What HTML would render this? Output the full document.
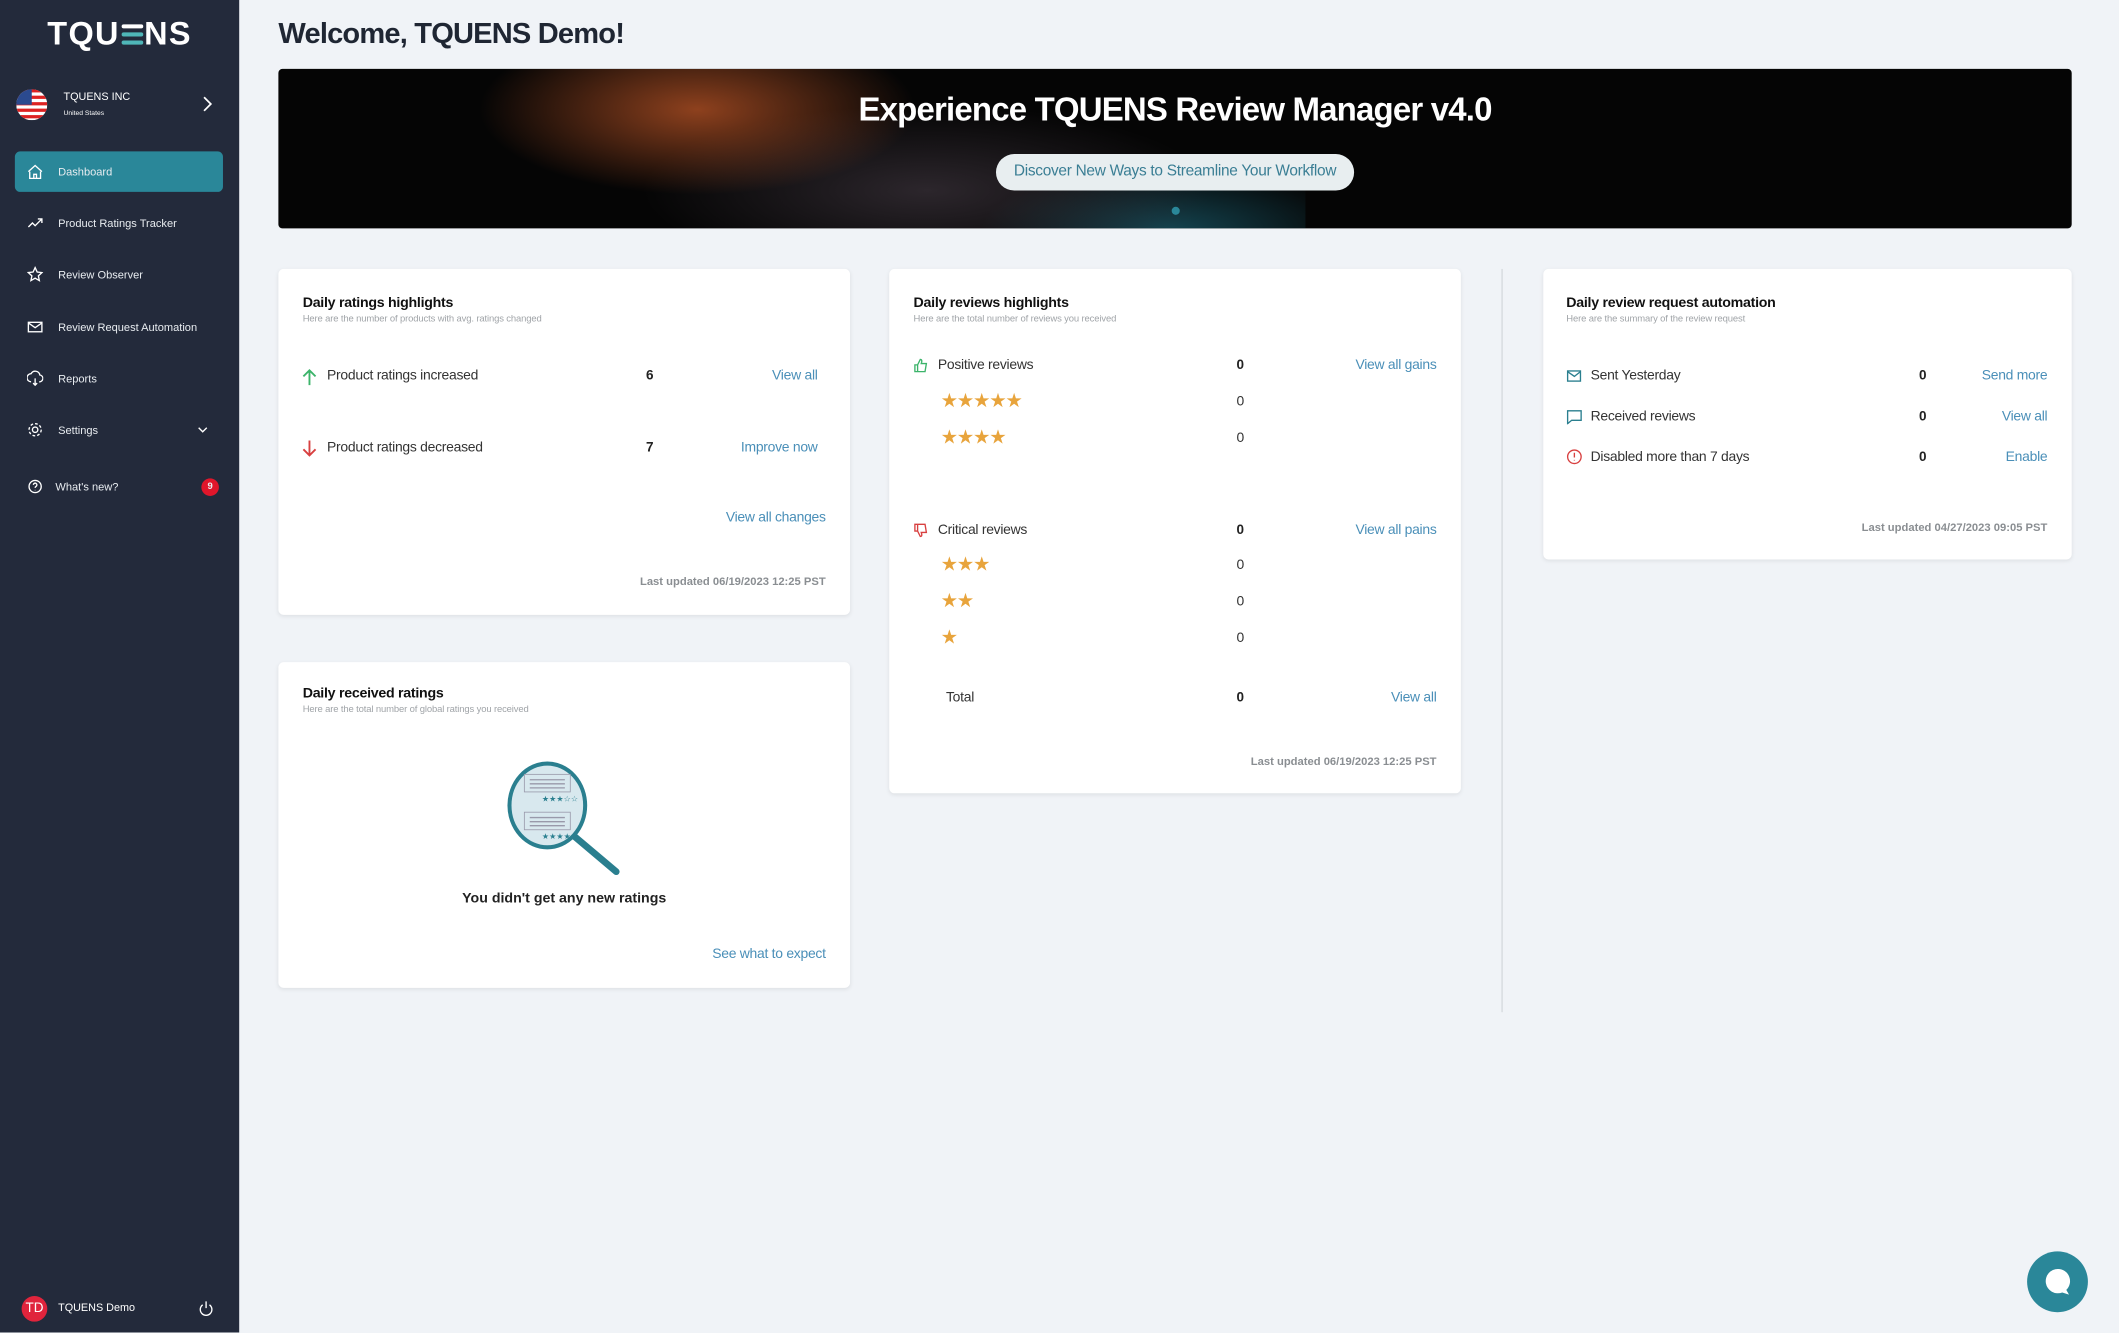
<!DOCTYPE html>
<html><head><meta charset="utf-8">
<style>
*{box-sizing:border-box;margin:0;padding:0}
html,body{width:2119px;height:1333px;overflow:hidden;background:#f0f3f7;font-family:"Liberation Sans",sans-serif}
#w{position:absolute;left:0;top:0;width:1568px;height:986px;transform:scale(1.35140);transform-origin:0 0;background:#f0f3f7}
.a{position:absolute}
.sb{left:0;top:0;width:177px;height:986px;background:#232a3b;color:#fff}
.nav{position:absolute;left:11px;width:154px;height:30px;font-size:8.2px;color:#e8ecf0;display:flex;align-items:center}
.nav svg{position:absolute;left:9px}
.nav span{position:absolute;left:32px}
.card{position:absolute;background:#fff;border-radius:4px;box-shadow:0 1px 3px rgba(0,0,0,.08)}
.h{font-size:10.5px;font-weight:bold;color:#111;letter-spacing:-.2px}
.sub{font-size:7px;color:#a0a4a8;margin-top:3px;letter-spacing:-.1px}
.t{font-size:10.3px;color:#333;letter-spacing:-.2px}
.n{font-size:10px;font-weight:bold;color:#222}
.lk{font-size:10.3px;color:#4a8fb8;letter-spacing:-.2px;text-align:right}
.lu{font-size:8.3px;color:#8a8e92;font-weight:bold;text-align:right}
.st{color:#e8a43c;font-size:14.5px;letter-spacing:-1px}
</style></head><body><div id="w">
<div class="a sb">
 <div class="a" style="left:35px;top:12px;font-size:24px;font-weight:bold;letter-spacing:1px;color:#fff">TQU<span style="display:inline-block;width:18px;height:18px;position:relative;vertical-align:-1px"><i style="position:absolute;left:1px;top:2px;width:16px;height:3px;background:#fff;border-radius:2px"></i><i style="position:absolute;left:1px;top:8px;width:16px;height:3px;background:#4fb6b8;border-radius:2px"></i><i style="position:absolute;left:1px;top:14px;width:16px;height:3px;background:#4fb6b8;border-radius:2px"></i></span>NS</div>
 <svg class="a" style="left:12px;top:66px" width="23" height="23" viewBox="0 0 24 24"><defs><clipPath id="c"><circle cx="12" cy="12" r="12"/></clipPath></defs><g clip-path="url(#c)"><rect width="24" height="24" fill="#fff"/><rect y="0" width="24" height="2.5" fill="#d22"/><rect y="5" width="24" height="2.5" fill="#d22"/><rect y="10" width="24" height="2.5" fill="#d22"/><rect y="15" width="24" height="2.5" fill="#d22"/><rect y="20" width="24" height="2.5" fill="#d22"/><rect width="12" height="12" fill="#2b4a8f"/></g></svg>
 <div class="a" style="left:47px;top:67px;font-size:8px">TQUENS INC</div>
 <div class="a" style="left:47px;top:81px;font-size:5px">United States</div>
 <svg class="a" style="left:148px;top:71px" width="10" height="12" viewBox="0 0 10 12"><path d="M3 1l5 5-5 5" stroke="#fff" stroke-width="1.3" fill="none"/></svg>
 <div class="nav" style="top:112px;background:#2a8799;border-radius:4px"><svg width="12" height="12" viewBox="0 0 12 12"><path d="M2 6v5h8V6M1 6l5-4.5L11 6M5 11V8h2v3" stroke="#fff" fill="none"/></svg><span>Dashboard</span></div>
 <div class="nav" style="top:150px"><svg width="12" height="12" viewBox="0 0 12 12"><path d="M1 9l3-3 2 2 5-5M8 3h3v3" stroke="#fff" fill="none"/></svg><span>Product Ratings Tracker</span></div>
 <div class="nav" style="top:188px"><svg width="12" height="12" viewBox="0 0 12 12"><path d="M6 1l1.5 3.3 3.5.4-2.6 2.4.7 3.5L6 8.8 2.9 10.6l.7-3.5L1 4.7l3.5-.4z" stroke="#fff" fill="none"/></svg><span>Review Observer</span></div>
 <div class="nav" style="top:227px"><svg width="12" height="12" viewBox="0 0 12 12"><rect x="1" y="2.5" width="10" height="7" stroke="#fff" fill="none"/><path d="M1 3l5 3.5L11 3" stroke="#fff" fill="none"/></svg><span>Review Request Automation</span></div>
 <div class="nav" style="top:265px"><svg width="12" height="12" viewBox="0 0 12 12"><path d="M3 8.5a3 3 0 010-6 3.5 3.5 0 016.5 1 2.3 2.3 0 01-.5 5M6 6v5M4.5 9.5L6 11l1.5-1.5" stroke="#fff" fill="none"/></svg><span>Reports</span></div>
 <div class="nav" style="top:303px"><svg width="12" height="12" viewBox="0 0 12 12"><circle cx="6" cy="6" r="2" stroke="#fff" fill="none"/><circle cx="6" cy="6" r="4.5" stroke="#fff" stroke-dasharray="2 1.5" fill="none"/></svg><span>Settings</span><svg style="left:135px" width="8" height="6" viewBox="0 0 8 6"><path d="M1 1.5l3 3 3-3" stroke="#fff" fill="none"/></svg></div>
 <div class="nav" style="top:345px"><svg width="12" height="12" viewBox="0 0 12 12"><circle cx="6" cy="6" r="4.5" stroke="#fff" fill="none"/><path d="M4.7 4.8a1.3 1.3 0 112 1.1c-.6.3-.7.6-.7 1.1M6 8.5v.3" stroke="#fff" fill="none"/></svg><span style="left:30px">What's new?</span><i style="position:absolute;left:138px;top:9px;width:13px;height:13px;border-radius:50%;background:#e0162b;font-size:7px;font-style:normal;font-weight:bold;text-align:center;line-height:13px">9</i></div>
 <div class="a" style="left:16px;top:959px;width:19px;height:19px;border-radius:50%;background:#e0243c;font-size:10px;text-align:center;line-height:19px">TD</div>
 <div class="a" style="left:43px;top:963px;font-size:8px">TQUENS Demo</div>
 <svg class="a" style="left:146px;top:962px" width="13" height="13" viewBox="0 0 13 13"><path d="M4 3.5a4.3 4.3 0 105 0M6.5 1v5" stroke="#fff" fill="none"/></svg>
</div>

<div class="a" style="left:206px;top:13px;font-size:21.5px;font-weight:bold;color:#1f2633;letter-spacing:-.6px">Welcome, TQUENS Demo!</div>

<div class="a" style="left:206px;top:51px;width:1327px;height:118px;border-radius:3px;overflow:hidden;background:#050505">
 <div class="a" style="left:140px;top:0;width:620px;height:118px;background:radial-gradient(ellipse 230px 90px at 170px 30px,rgba(200,90,40,.7),transparent 70%),radial-gradient(ellipse 300px 90px at 340px 90px,rgba(70,60,70,.6),transparent 70%),radial-gradient(ellipse 200px 70px at 520px 120px,rgba(30,110,130,.6),transparent 70%)"></div>
 <div class="a" style="left:0;top:17px;width:1327px;text-align:center;color:#fff;font-size:24.4px;font-weight:bold;letter-spacing:-.6px">Experience TQUENS Review Manager v4.0</div>
 <div class="a" style="left:531px;top:63px;width:265px;height:27px;background:#e8eef0;border-radius:14px;color:#3a7e94;font-size:11.4px;text-align:center;line-height:27px;letter-spacing:-.2px">Discover New Ways to Streamline Your Workflow</div>
 <div class="a" style="left:661px;top:102px;width:6px;height:6px;border-radius:50%;background:#2a8799"></div>
</div>

<div class="card" style="left:206px;top:199px;width:423px;height:256px">
 <div class="a" style="left:18px;top:19px"><div class="h">Daily ratings highlights</div><div class="sub">Here are the number of products with avg. ratings changed</div></div>
 <svg class="a" style="left:17px;top:73px" width="12" height="14" viewBox="0 0 12 14"><path d="M6 13V2M1.5 6.5L6 2l4.5 4.5" stroke="#3cb46a" stroke-width="1.4" fill="none"/></svg>
 <div class="a t" style="left:36px;top:74px">Product ratings increased</div><div class="a n" style="left:272px;top:74px">6</div><div class="a lk" style="right:24px;top:74px">View all</div>
 <svg class="a" style="left:17px;top:126px" width="12" height="14" viewBox="0 0 12 14"><path d="M6 1v11M1.5 7.5L6 12l4.5-4.5" stroke="#d84040" stroke-width="1.4" fill="none"/></svg>
 <div class="a t" style="left:36px;top:127px">Product ratings decreased</div><div class="a n" style="left:272px;top:127px">7</div><div class="a lk" style="right:24px;top:127px">Improve now</div>
 <div class="a lk" style="right:18px;top:179px">View all changes</div>
 <div class="a lu" style="right:18px;top:226px">Last updated 06/19/2023 12:25 PST</div>
</div>

<div class="card" style="left:206px;top:490px;width:423px;height:241px">
 <div class="a" style="left:18px;top:17px"><div class="h">Daily received ratings</div><div class="sub">Here are the total number of global ratings you received</div></div>
 <svg class="a" style="left:168px;top:72px" width="100" height="92" viewBox="0 0 100 92"><line x1="50" y1="56" x2="82" y2="83" stroke="#2a7f8f" stroke-width="5" stroke-linecap="round"/><ellipse cx="31" cy="34" rx="28" ry="31" fill="#d8e8ee" stroke="#2a7f8f" stroke-width="3"/><rect x="14" y="11" width="34" height="13" fill="none" stroke="#99a" stroke-width=".6"/><rect x="14" y="39" width="34" height="13" fill="none" stroke="#99a" stroke-width=".6"/><path d="M18 15h26M18 18h26M18 21h26M18 43h26M18 46h26M18 49h26" stroke="#99a"/><text x="27" y="31" font-size="6" fill="#2a7f8f">★★★☆☆</text><text x="27" y="59" font-size="6" fill="#2a7f8f">★★★★☆</text></svg>
 <div class="a" style="left:0;top:169px;width:423px;text-align:center;font-size:10.5px;font-weight:bold;color:#222">You didn't get any new ratings</div>
 <div class="a lk" style="right:18px;top:211px">See what to expect</div>
</div>

<div class="card" style="left:658px;top:199px;width:423px;height:388px">
 <div class="a" style="left:18px;top:19px"><div class="h">Daily reviews highlights</div><div class="sub">Here are the total number of reviews you received</div></div>
 <svg class="a" style="left:18px;top:66px" width="11" height="11" viewBox="0 0 11 11"><path d="M1 5h2v5H1zM3 5l2-4c1 0 1.3.7 1 2l-.3 1H9.5l-1 6H3" stroke="#3cb46a" fill="none"/></svg>
 <div class="a t" style="left:36px;top:66px">Positive reviews</div><div class="a n" style="left:257px;top:66px">0</div><div class="a lk" style="right:18px;top:66px">View all gains</div>
 <div class="a st" style="left:38px;top:90px">★★★★★</div><div class="a t" style="left:257px;top:93px">0</div>
 <div class="a st" style="left:38px;top:117px">★★★★</div><div class="a t" style="left:257px;top:120px">0</div>
 <svg class="a" style="left:18px;top:188px" width="11" height="11" viewBox="0 0 11 11"><path d="M1 1h2v5H1zM3 6l2 4c1 0 1.3-.7 1-2l-.3-1H9.5l-1-6H3" stroke="#d84040" fill="none"/></svg>
 <div class="a t" style="left:36px;top:188px">Critical reviews</div><div class="a n" style="left:257px;top:188px">0</div><div class="a lk" style="right:18px;top:188px">View all pains</div>
 <div class="a st" style="left:38px;top:211px">★★★</div><div class="a t" style="left:257px;top:214px">0</div>
 <div class="a st" style="left:38px;top:238px">★★</div><div class="a t" style="left:257px;top:241px">0</div>
 <div class="a st" style="left:38px;top:265px">★</div><div class="a t" style="left:257px;top:268px">0</div>
 <div class="a t" style="left:42px;top:312px">Total</div><div class="a n" style="left:257px;top:312px">0</div><div class="a lk" style="right:18px;top:312px">View all</div>
 <div class="a lu" style="right:18px;top:359px">Last updated 06/19/2023 12:25 PST</div>
</div>

<div class="a" style="left:1111px;top:199px;width:1px;height:550px;background:#d6dadf"></div>

<div class="card" style="left:1142px;top:199px;width:391px;height:215px">
 <div class="a" style="left:17px;top:19px"><div class="h">Daily review request automation</div><div class="sub">Here are the summary of the review request</div></div>
 <svg class="a" style="left:17px;top:74px" width="12" height="11" viewBox="0 0 12 11"><rect x="1" y="1.5" width="9.5" height="7.5" stroke="#2a7f8f" fill="none"/><path d="M1 2l5 3.5L10.5 2" stroke="#2a7f8f" fill="none"/></svg>
 <div class="a t" style="left:35px;top:74px">Sent Yesterday</div><div class="a n" style="left:278px;top:74px">0</div><div class="a lk" style="right:18px;top:74px">Send more</div>
 <svg class="a" style="left:17px;top:104px" width="12" height="11" viewBox="0 0 12 11"><path d="M1 1h10v7H4l-3 2.5z" stroke="#2a7f8f" fill="none"/></svg>
 <div class="a t" style="left:35px;top:104px">Received reviews</div><div class="a n" style="left:278px;top:104px">0</div><div class="a lk" style="right:18px;top:104px">View all</div>
 <svg class="a" style="left:17px;top:133px" width="12" height="12" viewBox="0 0 12 12"><circle cx="6" cy="6" r="5" stroke="#d84040" fill="none"/><path d="M6 3v3.5M6 8.3v.5" stroke="#d84040"/></svg>
 <div class="a t" style="left:35px;top:134px">Disabled more than 7 days</div><div class="a n" style="left:278px;top:134px">0</div><div class="a lk" style="right:18px;top:134px">Enable</div>
 <div class="a lu" style="right:18px;top:186px">Last updated 04/27/2023 09:05 PST</div>
</div>

<div class="a" style="left:1500px;top:926px;width:45px;height:45px;border-radius:50%;background:#2a8799"></div>
<svg class="a" style="left:1510px;top:935px" width="26" height="26" viewBox="0 0 26 26"><path d="M13 4a9 9 0 016 15.5L21 23l-5-1.6A9 9 0 1113 4z" fill="#fff"/></svg>
</div></body></html>
